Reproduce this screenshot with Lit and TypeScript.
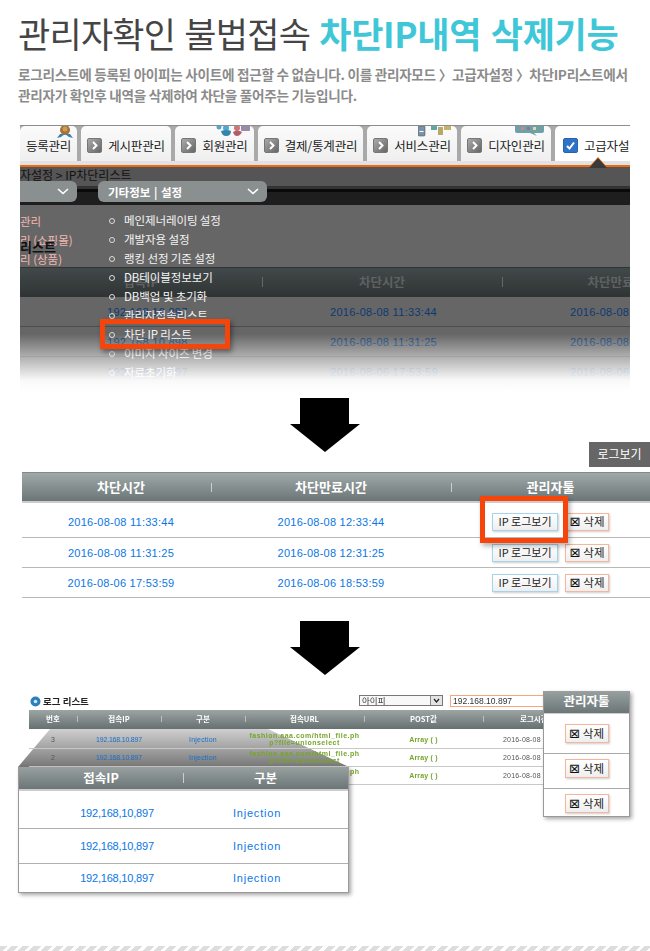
import { LitElement, html, css, svg } from "lit";
import { customElement } from "lit/decorators.js";

const arrow = html`<svg class="arrow" width="70" height="54" viewBox="0 0 70 54"><path d="M10 0H59V26H70L35 54L0 26H10Z" fill="#000"/></svg>`;
const chev = html`<svg width="12" height="7" viewBox="0 0 12 7"><path d="M1 1L6 5.5L11 1" fill="none" stroke="#fff" stroke-width="1.6"/></svg>`;

const tabDeco: Record<string, unknown> = {
  medal: svg`<circle cx="8" cy="5" r="5" fill="#a8703c"/><path d="M3 9L0 13L4 12L8 9L12 12L16 13L13 9Z" fill="#3f7fa8"/><circle cx="8" cy="4" r="2.5" fill="#c9a050"/>`,
  people: svg`<circle cx="6" cy="2" r="2.5" fill="#56a6c8"/><circle cx="13" cy="3" r="3" fill="#56a6c8"/><path d="M8 6Q14 4 18 6Q18 11 13 11Q9 11 8 6Z" fill="#2f86b0"/><circle cx="24" cy="3" r="3" fill="#c77"/><path d="M20 7Q24 4 29 7Q27 11 24 11Q21 11 20 7Z" fill="#b45a6a"/><rect x="28" y="0" width="9" height="6" rx="1" fill="#998aa8"/>`,
  service: svg`<rect x="0" y="1" width="7" height="10" rx="1" fill="#7a93a8" stroke="#445" stroke-width=".5"/><rect x="1.5" y="6" width="4" height="1" fill="#fff"/><rect x="13" y="0" width="6" height="5" fill="#5fa8a0"/><rect x="20" y="2" width="5" height="8" fill="#b7a76a"/><rect x="26" y="0" width="7" height="5" fill="#c2b36e"/>`,
  design: svg`<path d="M1 0H30V6Q30 8 28 8H20L23 11L16 8H3Q1 8 1 6Z" fill="#6fa0a8"/><rect x="7" y="2" width="3" height="3" fill="#c88"/><rect x="13" y="2" width="3" height="3" fill="#879"/><rect x="19" y="2" width="3" height="3" fill="#dd9"/>`,
};

const tabs = [
  { label: "등록관리", w: 57, noIcon: true, deco: "medal", decoLeft: 37 },
  { label: "게시판관리", w: 90 },
  { label: "회원관리", w: 79, deco: "people", decoLeft: 38 },
  { label: "결제/통계관리", w: 105 },
  { label: "서비스관리", w: 90, deco: "service", decoLeft: 51 },
  { label: "디자인관리", w: 90, deco: "design", decoLeft: 53 },
  { label: "고급자설정", w: 90, active: true },
];

const menu = [
  "메인제너레이팅 설정", "개발자용 설정", "랭킹 선정 기준 설정", "DB테이블정보보기",
  "DB백업 및 초기화", "관리자접속리스트", "차단 IP 리스트", "이미지 사이즈 변경", "자료초기화",
];

const blockRows = [
  ["2016-08-08 11:33:44", "2016-08-08 12:33:44"],
  ["2016-08-08 11:31:25", "2016-08-08 12:31:25"],
  ["2016-08-06 17:53:59", "2016-08-06 18:53:59"],
];

@customElement("app-root")
export class AppRoot extends LitElement {
  static styles = css`
    :host { display: block; width: 650px; height: 951px; overflow: hidden; background: #fff;
      font-family: "Noto Sans CJK KR", "Liberation Sans", sans-serif; }
    .page { display: flex; flex-direction: column; height: 951px; }

    .head { height: 125px; padding-left: 18px; box-sizing: border-box; }
    h1 { margin: 0; padding-top: 10px; height: 64px; box-sizing: border-box; font-size: 35px; line-height: 46px;
      font-weight: 400; color: #454545; letter-spacing: -0.75px; white-space: nowrap; word-spacing: 2px; }
    h1 b { color: #3fc7d8; font-weight: 700; letter-spacing: -0.3px; }
    .desc { margin: 0; font-size: 13.6px; line-height: 21px; font-weight: 700; color: #8b8b8b;
      letter-spacing: -0.28px; white-space: nowrap; }

    .shot { position: relative; margin-left: 20px; width: 610px; height: 267px; overflow: hidden;
      border-top: 1px solid #8d8d8d; box-sizing: border-box; background: #666; }
    .tabs { display: flex; gap: 4px; height: 35px; background: #a9a9a9; padding-top: 0; }
    .tab { position: relative; flex: none; box-sizing: border-box; height: 35px; padding-top: 3px;
      display: flex; align-items: center; justify-content: center; gap: 6px; font-size: 12.5px; color: #222;
      background: linear-gradient(#fbfbfb, #efefef); border-radius: 5px 5px 0 0; letter-spacing: -0.2px; white-space: nowrap; }
    .tab.active { justify-content: flex-start; padding-left: 8px; background: #fff; }
    .tab svg.deco { position: absolute; top: -1px; }
    .ic { width: 15px; height: 15px; border: 1px solid #777; box-sizing: border-box; border-radius: 2px;
      background: linear-gradient(135deg, #aaa, #666); }
    .ic svg { display: block; }
    .active .ic { background: #2f73c8; border-color: #2a62b0; }
    .strip { height: 4px; background: #e2e2e2; }
    .orange { height: 2px; background: #ee6a10; }
    .notch { position: absolute; left: 569px; top: 32px; width: 0; height: 0;
      border-left: 9px solid transparent; border-right: 9px solid transparent; border-bottom: 10px solid #3a3a3a;
      filter: drop-shadow(0 -1px 0 #ee6a10); }
    .crumb { height: 16px; background: #555; font-size: 12px; line-height: 15px; color: #111; white-space: nowrap; }
    .band { position: relative; height: 22px; background: linear-gradient(#555 0 3px, #333 3px 6px, #0a0a0a 6px 9px, #1e1e1e 9px); }
    .pill { position: absolute; top: -2px; height: 21px; box-sizing: border-box; border-radius: 6px; background: #8a9090;
      display: flex; align-items: center; justify-content: space-between; padding: 0 8px 0 10px;
      font-size: 11.5px; font-weight: 700; color: #fff; word-spacing: 1px; }
    .p1 { left: -20px; width: 77px; }
    .p2 { left: 78px; width: 169px; }
    .body { position: relative; height: 187px; }
    .side { position: absolute; left: 0; top: 7px; font-size: 11.5px; line-height: 19px; color: #f2b6b0; }
    .side div { height: 19px; white-space: nowrap; }
    .ghost { position: absolute; left: 0; top: 34px; font-size: 13px; font-weight: 700; color: #111; line-height: 16px; }
    .dark { position: absolute; left: 0; right: 0; top: 62px; height: 30px; box-sizing: border-box; border-top: 1px solid #333;
      background: linear-gradient(#42494a, #2f3333); display: grid; grid-template-columns: 242px 240px 240px;
      color: #5e6262; font-size: 12.5px; font-weight: 700; line-height: 28px; text-align: center; }
    .dark span + span { position: relative; }
    .dark span + span::before { content: ""; position: absolute; left: 0; top: 9px; height: 10px; width: 1px; background: #666; }
    .bg-row { position: absolute; left: 0; right: 0; height: 30px; box-sizing: border-box; border-bottom: 1px solid #4d4d4d;
      font: 11px/30px "Liberation Sans", sans-serif; letter-spacing: .3px; color: #0c3a72; white-space: nowrap; }
    .bg-row span { position: absolute; top: 0; }
    .menu { position: absolute; left: 0; top: 6px; margin: 0; padding: 0; list-style: none; }
    .menu li { position: relative; height: 19.05px; padding-left: 104px; font-size: 11.5px; line-height: 19px;
      color: #f4f4f4; white-space: nowrap; letter-spacing: -0.1px; }
    .menu li::before { content: ""; position: absolute; left: 89px; top: 6.5px; width: 6px; height: 6px; box-sizing: border-box;
      border: 1.5px solid #ddd; border-radius: 50%; }
    .mark { position: absolute; box-sizing: border-box; border: 5px solid #f5450a; box-shadow: 2px 3px 5px rgba(0,0,0,.4); }
    .m1 { left: 80px; top: 114px; width: 130px; height: 30px; }
    .fade { position: absolute; left: 0; right: 0; bottom: 0; height: 58px;
      background: linear-gradient(rgba(255,255,255,0), rgba(255,255,255,.55) 45%, rgba(255,255,255,.96) 80%, #fff); }

    .arrow-row { display: grid; grid-template-columns: 1fr auto 1fr; height: 80px; padding-top: 6px; box-sizing: border-box; }
    .arrow-row .arrow { grid-column: 2; }
    .logbtn { grid-column: 3; justify-self: end; align-self: end; margin-bottom: 5px; width: 61px; height: 25px; background: #666;
      color: #fff; font-size: 12px; line-height: 24px; text-align: center; }

    .block { position: relative; margin-left: 22px; width: 628px; }
    .thead { display: grid; grid-template-columns: 189px 240px 199px; height: 31px; box-sizing: border-box; border-top: 1px solid #7f8a8a;
      border-bottom: 2px solid #ccc; background: linear-gradient(#a0a8a8, #6c7676); color: #fff; font-size: 13px;
      font-weight: 700; line-height: 28px; text-align: center; }
    .thead > span:first-child, .trow > span:first-child { padding-left: 9px; }
    .thead span + span, .lhead span + span, .ohead span + span { position: relative; }
    .thead span + span::before { content: ""; position: absolute; left: 0; top: 10px; height: 9px; width: 1px; background: #c8cfcf; }
    .trow { display: grid; grid-template-columns: 189px 240px 199px; height: 30px; border-bottom: 1px solid #b8b8b8; box-sizing: border-box;
      align-items: center; text-align: center; font: 11px "Liberation Sans", sans-serif; letter-spacing: .25px; color: #0a76e6; }
    .trow.f { height: 35px; padding-top: 4px; }
    .acts { display: flex; justify-content: flex-start; gap: 7px; padding-left: 41px; }
    .btn { box-sizing: border-box; height: 18px; background: linear-gradient(#fff, #eee); font-family: "Noto Sans CJK KR", sans-serif;
      font-size: 11px; line-height: 15px; letter-spacing: 0; color: #222; text-align: center; white-space: nowrap;
      box-shadow: 1px 1px 2px rgba(0,0,0,.2); }
    .btn.lbtn { width: 66px; border: 1px solid #a5d3ee; }
    .btn.del { width: 44px; border: 1px solid #f5b69b; font-size: 11.5px; }
    .x { font-family: "DejaVu Sans", sans-serif; font-size: 13px; margin-right: 3px; color: #111; }
    .m2 { left: 458px; top: 24px; width: 88px; height: 47px; box-shadow: 2px 3px 5px rgba(0,0,0,.3); }

    .arrow-row.second { height: 92px; padding-top: 23px; }

    .logwrap { position: relative; height: 256px; }
    .lg { position: absolute; left: 29px; top: 0; width: 601px; filter: blur(.35px); }
    .tools { height: 20px; display: flex; align-items: flex-end; position: relative; }
    .ltitle { display: flex; align-items: center; gap: 2px; margin: 0 0 2px 1px; font-size: 9.5px; font-weight: 700; color: #222; }
    .sel { position: absolute; left: 330px; top: 5px; width: 84px; height: 11px; box-sizing: border-box; border: 1px solid #777;
      font-size: 8.5px; line-height: 8px; padding-left: 2px; color: #333; background: #f8f8f8; }
    .sel svg { position: absolute; right: 0; top: 0; background: #e4e4e4; border-left: 1px solid #888; }
    .inp { position: absolute; left: 421px; top: 5px; width: 100px; height: 12px; box-sizing: border-box; border: 1px solid #f7a77e;
      font: 8.5px/10px "Liberation Sans", sans-serif; padding-left: 2px; color: #333; }
    .lhead { display: grid; grid-template-columns: 48px 84px 84px 119px 119px 147px; height: 19px; background: linear-gradient(#9ca4a4, #677070);
      color: #fff; font-size: 7.5px; font-weight: 700; line-height: 17px; text-align: center; margin-top: 0; }
    .lhead span + span::before { content: ""; position: absolute; left: 0; top: 6px; height: 6px; width: 1px; background: #b8c0c0; }
    .lhead span:last-child, .lrow span:last-child { text-align: left; }
    .lhead span:last-child { padding-left: 37px; }
    .lrow span:last-child { padding-left: 20px; }
    .lrow { display: grid; grid-template-columns: 48px 84px 84px 119px 119px 147px; height: 18px; box-sizing: border-box; border-bottom: 1px solid #c8c8c8;
      align-items: center; text-align: center; font: 7px/7.5px "Liberation Sans", sans-serif; letter-spacing: .2px; color: #555; white-space: nowrap; }
    .lrow.first { height: 20px; padding-top: 2px; }
    .blue { color: #1a6fc8; }
    .ip { letter-spacing: -.2px; }
    .green { color: #76a52a; font-weight: 700; }
    .url { font-size: 7px; line-height: 6.5px; letter-spacing: .5px; }
    .wedge { position: absolute; left: 0; top: 0; }

    .ov { position: absolute; box-sizing: border-box; background: #fff; border: 1px solid #999; box-shadow: 2px 2px 4px rgba(0,0,0,.35); border-top: 0; }
    .o1 { left: 18px; top: 77px; width: 331px; height: 126px; }
    .ohead { display: grid; grid-template-columns: 164px 165px; height: 24px; box-sizing: border-box; border-bottom: 2px solid #ccc;
      background: linear-gradient(#98a0a0, #6c7676); color: #fff; font-size: 12.5px; font-weight: 700; line-height: 21px; text-align: center; }
    .ohead span + span::before { content: ""; position: absolute; left: 0; top: 6px; height: 10px; width: 1px; background: #c8cfcf; }
    .orow { display: grid; grid-template-columns: 196px 84px 1fr; height: 35px; box-sizing: border-box; border-bottom: 1px solid #b0b0b0; align-items: center; text-align: center;
      font: 11px "Liberation Sans", sans-serif; letter-spacing: -.2px; color: #0a76e6; }
    .orow span + span { letter-spacing: .8px; }
    .orow:last-child { border-bottom: 0; height: 28px; }
    .orow.f { height: 38px; padding-top: 6px; }
    .o2 { left: 543px; top: 1px; width: 87px; height: 126px; }
    .o2 .h { height: 23px; box-sizing: border-box; border-bottom: 1px solid #ccc; background: linear-gradient(#98a0a0, #6c7676); color: #fff; font-size: 12.5px;
      font-weight: 700; line-height: 20px; text-align: center; }
    .o2 .r { height: 35px; box-sizing: border-box; border-bottom: 1px solid #aaa; display: flex; align-items: center; justify-content: center; padding-bottom: 6px; }
    .o2 .r.f { height: 40px; padding-bottom: 0; }
    .o2 .r:last-child { border-bottom: 0; height: 28px; padding-bottom: 0; }
    .o2 .btn { height: 19px; line-height: 16px; }

    .hatch { height: 5px; background: repeating-linear-gradient(135deg, #ddd 0 5px, #fff 5px 8px); }
  `;

  private tab(t: (typeof tabs)[number]) {
    return html`<div class="tab ${t.active ? "active" : ""}" style="width:${t.w}px">
      ${t.deco ? html`<svg class="deco" style="left:${t.decoLeft}px" width="38" height="14" viewBox="0 0 38 14">${tabDeco[t.deco]}</svg>` : ""}
      ${t.noIcon ? "" : html`<i class="ic"><svg width="13" height="13" viewBox="0 0 13 13"><path d="${t.active ? "M3 7L5.5 9.5L10 3.5" : "M5 3L8.5 6.5L5 10"}" fill="none" stroke="#fff" stroke-width="2"/></svg></i>`}
      <span>${t.label}</span>
    </div>`;
  }

  render() {
    return html`<div class="page">
      <header class="head">
        <h1>관리자확인 불법접속 <b>차단IP내역 삭제기능</b></h1>
        <p class="desc">로그리스트에 등록된 아이피는 사이트에 접근할 수 없습니다. 이를 관리자모드 〉고급자설정 〉차단IP리스트에서<br/>관리자가 확인후 내역을 삭제하여 차단을 풀어주는 기능입니다.</p>
      </header>

      <section class="shot">
        <div class="tabs">${tabs.map((t) => this.tab(t))}</div>
        <div class="strip"></div>
        <div class="orange"></div>
        <div class="notch"></div>
        <div class="crumb">자설정 &gt; IP차단리스트</div>
        <div class="band">
          <div class="pill p1"><span></span>${chev}</div>
          <div class="pill p2"><span>기타정보 | 설정</span>${chev}</div>
        </div>
        <div class="body">
          <div class="dark"><span>접속IP</span><span>차단시간</span><span>차단만료시간</span></div>
          <div class="bg-row" style="top:92px"><span style="left:87px">192.168.10.897</span><span style="left:310px">2016-08-08 11:33:44</span><span style="left:550px">2016-08-08 12:33:44</span></div>
          <div class="bg-row" style="top:122px"><span style="left:87px">192.168.10.898</span><span style="left:310px">2016-08-08 11:31:25</span><span style="left:550px">2016-08-08 12:31:25</span></div>
          <div class="bg-row" style="top:152px"><span style="left:87px">192.168.10.897</span><span style="left:310px">2016-08-06 17:53:59</span><span style="left:550px">2016-08-06 18:53:59</span></div>
          <div class="side"><div>관리</div><div>리 (쇼핑몰)</div><div>리 (상품)</div></div>
          <div class="ghost">리스트</div>
          <ul class="menu">${menu.map((m) => html`<li>${m}</li>`)}</ul>
          <div class="fade"></div>
          <div class="mark m1"></div>
        </div>
      </section>

      <div class="arrow-row">${arrow}<div class="logbtn">로그보기</div></div>

      <section class="block">
        <div class="thead"><span>차단시간</span><span>차단만료시간</span><span>관리자툴</span></div>
        ${blockRows.map((r, i) => html`<div class="trow ${i === 0 ? "f" : ""}"><span>${r[0]}</span><span>${r[1]}</span>
          <div class="acts"><div class="btn lbtn">IP 로그보기</div><div class="btn del"><span class="x">⊠</span>삭제</div></div></div>`)}
        <div class="mark m2"></div>
      </section>

      <div class="arrow-row second">${arrow}</div>

      <section class="logwrap">
        <svg class="wedge" width="650" height="80" viewBox="0 0 650 80">
          <defs><linearGradient id="wg" x1="0" y1="0" x2="0" y2="1"><stop offset="0" stop-color="#cfcfcf"/><stop offset="1" stop-color="#777"/></linearGradient></defs>
          <polygon points="18,77 50,39 268,39 349,77" fill="url(#wg)"/>
        </svg>
        <div class="lg">
          <div class="tools">
            <div class="ltitle"><svg width="11" height="11" viewBox="0 0 11 11"><circle cx="5.5" cy="5.5" r="5" fill="#2c7fb8"/><circle cx="5.5" cy="5.5" r="1.8" fill="#cfe8f5"/></svg>로그 리스트</div>
            <div class="sel">아이피<svg width="11" height="9" viewBox="0 0 11 9"><path d="M3 3L5.5 6L8 3" fill="none" stroke="#222" stroke-width="1.2"/></svg></div>
            <div class="inp">192.168.10.897</div>
          </div>
          <div class="lhead"><span>번호</span><span>접속IP</span><span>구분</span><span>접속URL</span><span>POST값</span><span>로그시간</span></div>
          ${["3", "2", "1"].map((n, i) => html`<div class="lrow ${i === 0 ? "first" : ""}"><span>${n}</span><span class="blue ip">192.168.10.897</span><span class="blue">Injection</span>
            <span class="green url">fashion.aaa.com/html_file.ph<br/>p?file=unionselect</span><span class="green">Array ( )</span><span>2016-08-08 11:33:44</span></div>`)}
        </div>
        <div class="ov o1">
          <div class="ohead"><span>접속IP</span><span>구분</span></div>
          <div class="orow f"><span>192,168,10,897</span><span>Injection</span></div>
          <div class="orow"><span>192,168,10,897</span><span>Injection</span></div>
          <div class="orow"><span>192,168,10,897</span><span>Injection</span></div>
        </div>
        <div class="ov o2">
          <div class="h">관리자툴</div>
          ${[0, 1, 2].map((i) => html`<div class="r ${i === 0 ? "f" : ""}"><div class="btn del"><span class="x">⊠</span>삭제</div></div>`)}
        </div>
      </section>
      <div class="hatch"></div>
    </div>`;
  }
}
